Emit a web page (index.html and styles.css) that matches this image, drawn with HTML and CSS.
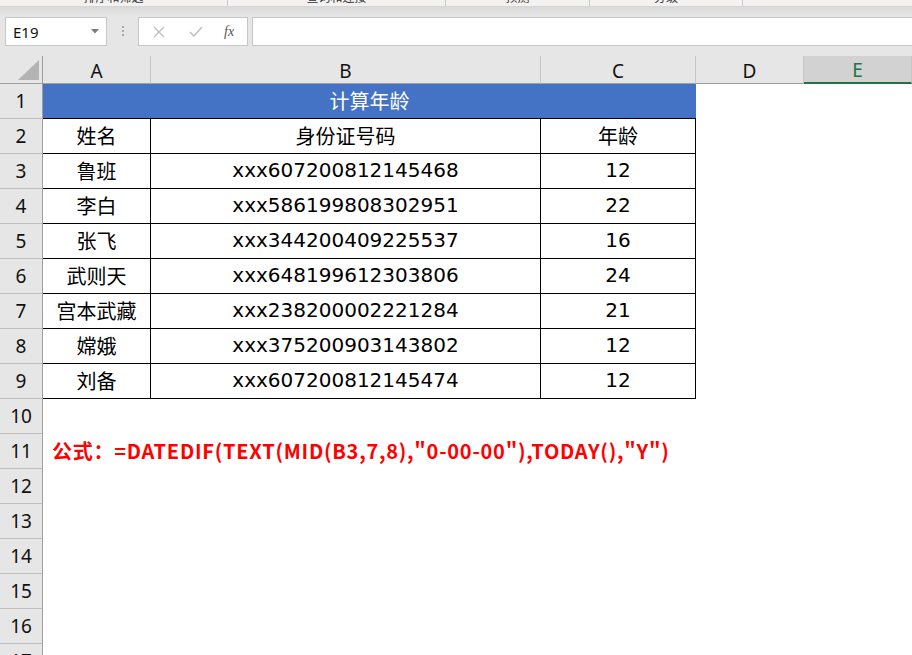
FILE: index.html
```html
<!DOCTYPE html>
<html lang="zh-CN">
<head>
    <meta charset="UTF-8">
    <title>计算年龄 - Excel</title>
    <link rel="stylesheet" href="styles.css">
</head>
<body>
    <!-- bottom edge of the ribbon -->
    <div class="ribbon-edge">
        <div class="group g1"><span>排序和筛选</span></div>
        <div class="group g2"><span>查询和连接</span></div>
        <div class="group g3"><span>预测</span></div>
        <div class="group g4"><span>分级</span></div>
        <div class="group g5"></div>
    </div>

    <!-- formula bar -->
    <div class="formula-bar">
        <div class="name-box">
            <span>E19</span>
            <svg class="caret" width="8" height="5" viewBox="0 0 8 5"><path d="M0 0H8L4 4.5Z" fill="#7a7a7a"/></svg>
        </div>
        <div class="grip"><i></i><i></i><i></i></div>
        <div class="fx-buttons">
            <svg width="12" height="12" viewBox="0 0 12 12"><path d="M1 1L11 11M11 1L1 11" stroke="#bdbdbd" stroke-width="1.3" fill="none"/></svg>
            <svg width="14" height="11" viewBox="0 0 14 11"><path d="M1 6L5 10L13 1" stroke="#c2c2c2" stroke-width="1.6" fill="none"/></svg>
            <span class="fx">fx</span>
        </div>
        <div class="fx-input"></div>
    </div>

    <!-- sheet grid -->
    <div class="sheet">
        <div class="corner"><svg width="21" height="20" viewBox="0 0 21 20"><path d="M21 0V20H0Z" fill="#b3b3b3"/></svg></div>
        <div class="colhead">A</div>
        <div class="colhead">B</div>
        <div class="colhead">C</div>
        <div class="colhead">D</div>
        <div class="colhead sel">E</div>

        <div class="rowhead">1</div>
        <div class="title">计算年龄</div>
        <div class="blank"></div>
        <div class="blank"></div>

        <div class="rowhead">2</div>
        <div class="cell">姓名</div>
        <div class="cell">身份证号码</div>
        <div class="cell">年龄</div>
        <div class="blank"></div>
        <div class="blank"></div>

        <div class="rowhead">3</div>
        <div class="cell">鲁班</div>
        <div class="cell num">xxx607200812145468</div>
        <div class="cell num">12</div>
        <div class="blank"></div>
        <div class="blank"></div>

        <div class="rowhead">4</div>
        <div class="cell">李白</div>
        <div class="cell num">xxx586199808302951</div>
        <div class="cell num">22</div>
        <div class="blank"></div>
        <div class="blank"></div>

        <div class="rowhead">5</div>
        <div class="cell">张飞</div>
        <div class="cell num">xxx344200409225537</div>
        <div class="cell num">16</div>
        <div class="blank"></div>
        <div class="blank"></div>

        <div class="rowhead">6</div>
        <div class="cell">武则天</div>
        <div class="cell num">xxx648199612303806</div>
        <div class="cell num">24</div>
        <div class="blank"></div>
        <div class="blank"></div>

        <div class="rowhead">7</div>
        <div class="cell">宫本武藏</div>
        <div class="cell num">xxx238200002221284</div>
        <div class="cell num">21</div>
        <div class="blank"></div>
        <div class="blank"></div>

        <div class="rowhead">8</div>
        <div class="cell">嫦娥</div>
        <div class="cell num">xxx375200903143802</div>
        <div class="cell num">12</div>
        <div class="blank"></div>
        <div class="blank"></div>

        <div class="rowhead">9</div>
        <div class="cell">刘备</div>
        <div class="cell num">xxx607200812145474</div>
        <div class="cell num">12</div>
        <div class="blank"></div>
        <div class="blank"></div>

        <div class="rowhead">10</div>
        <div class="blank wide"></div>

        <div class="rowhead">11</div>
        <div class="blank wide formula">公式：=DATEDIF(TEXT(MID(B3,7,8),"0-00-00"),TODAY(),"Y")</div>

        <div class="rowhead">12</div>
        <div class="blank wide"></div>
        <div class="rowhead">13</div>
        <div class="blank wide"></div>
        <div class="rowhead">14</div>
        <div class="blank wide"></div>
        <div class="rowhead">15</div>
        <div class="blank wide"></div>
        <div class="rowhead">16</div>
        <div class="blank wide"></div>
        <div class="rowhead">17</div>
        <div class="blank wide"></div>
    </div>
</body>
</html>
```

FILE: styles.css
```css
* { box-sizing: border-box; }
html, body { margin: 0; height: 655px; overflow: hidden; }
body { font-family: "Noto Sans CJK SC", sans-serif; background: #fff; color: #000; }

/* ribbon edge */
.ribbon-edge { display: flex; height: 7px; background: #f3f2f1; border-bottom: 1px solid #d6d6d6; overflow: hidden; }
.group { display: flex; justify-content: center; height: 6px; border-right: 1px solid #c8c8c8; }
.group span { display: block; margin-top: -10px; font-size: 12px; line-height: 14px; color: #333; }
.g1 { width: 228px; }
.g2 { width: 218px; }
.g3 { width: 144px; }
.g4 { width: 153px; }
.g5 { flex: 1; border-right: none; }

/* formula bar */
.formula-bar { display: flex; align-items: flex-start; height: 49px; padding: 10px 0 0 5px; background: linear-gradient(#d9d9d9, #e6e6e6 9px); }
.name-box { display: flex; align-items: center; justify-content: space-between; width: 102px; height: 29px; padding: 0 7px 0 7px; background: #fff; border: 1px solid #c6c6c6; font-family: "Noto Sans", sans-serif; font-size: 15px; color: #111; }
.grip { display: flex; flex-direction: column; gap: 2px; width: 31px; padding: 9px 0 0 15px; }
.grip i { display: block; width: 2px; height: 2px; background: #a8a8a8; }
.fx-buttons { display: flex; align-items: center; gap: 0; width: 110px; height: 29px; padding: 0 0 0 14px; background: #fff; border: 1px solid #c6c6c6; }
.fx-buttons svg:nth-child(2) { margin-left: 24px; }
.fx { margin-left: 21px; font-family: "Liberation Serif", serif; font-style: italic; font-size: 14px; color: #555; }
.fx-input { flex: 1; height: 29px; margin-left: 4px; background: #fff; border: 1px solid #c6c6c6; border-right: none; }

/* sheet */
.sheet { display: grid; grid-template-columns: 43px 108px 390px 155px 108px 108px; grid-template-rows: 28px repeat(17, 35px); }
.corner { display: flex; align-items: flex-end; justify-content: flex-end; padding: 0 3px 3px 0; background: #e6e6e6; border-right: 1px solid #9e9e9e; border-bottom: 1px solid #9e9e9e; }
.colhead { display: flex; align-items: center; justify-content: center; padding-top: 2px; background: #e6e6e6; border-right: 1px solid #c6c6c6; border-bottom: 1px solid #9e9e9e; font-family: "Noto Sans", sans-serif; font-size: 19px; color: #111; }
.colhead.sel { background: #d2d2d2; color: #217346; border-bottom: 2px solid #217346; }
.rowhead { display: flex; align-items: center; justify-content: center; background: #e6e6e6; border-right: 1px solid #9e9e9e; border-bottom: 1px solid #bdbdbd; font-family: "Noto Sans", sans-serif; font-size: 19px; color: #111; }

.title { grid-column: span 3; display: flex; align-items: center; justify-content: center; padding-bottom: 2px; background: #4472c4; color: #fff; border-bottom: 1px solid #000; font-size: 20px; }
.cell { display: flex; align-items: center; justify-content: center; padding-bottom: 2px; border-right: 1px solid #000; border-bottom: 1px solid #000; font-size: 20px; }
.cell.num { font-family: "DejaVu Sans", sans-serif; font-size: 20px; }
.blank { background: #fff; }
.wide { grid-column: span 5; }
.formula { display: flex; align-items: center; padding: 0 0 2px 9px; color: #ff0000; font-weight: bold; font-size: 20px; letter-spacing: 0.75px; white-space: nowrap; }
```
